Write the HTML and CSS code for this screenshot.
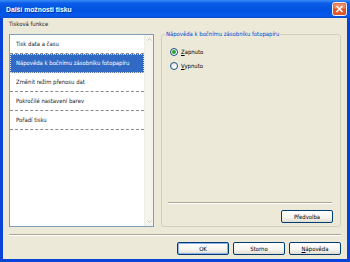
FILE: index.html
```html
<!DOCTYPE html>
<html>
	<head>
		<meta charset="utf-8" />
		<title>Další možnosti tisku</title>
		<link rel="stylesheet" href="styles.css">
	</head>
	<body>
<div class="window">
    <div class="titlebar">
        <span class="title">Další možnosti tisku</span>
        <svg class="close" width="15" height="14" viewBox="0 0 15 14">
            <rect x="0.5" y="0.5" width="14" height="13" rx="2" fill="#e0572f" stroke="#f2f2f2"/>
            <rect x="1.5" y="1.5" width="12" height="5" rx="1" fill="#ec8a66"/>
            <path d="M4.5 4L10.5 10M10.5 4L4.5 10" stroke="#fff" stroke-width="1.6"/>
        </svg>
    </div>
    <div class="content">
        <div class="label">Tisková funkce</div>
        <div class="main">
            <div class="listbox">
                <ul class="items">
                    <li>Tisk data a času</li>
                    <li class="selected">Nápověda k bočnímu zásobníku fotopapíru</li>
                    <li>Změnit režim přenosu dat</li>
                    <li>Pokročilé nastavení barev</li>
                    <li>Pořadí tisku</li>
                </ul>
                <div class="scrollbar">
                    <span class="arrow"><svg width="5" height="3" viewBox="0 0 5 3"><path d="M0.5 2.5L2.5 0.5L4.5 2.5" fill="none" stroke="#c9c7ba"/></svg></span>
                    <span class="track"></span>
                    <span class="arrow"><svg width="5" height="3" viewBox="0 0 5 3"><path d="M0.5 0.5L2.5 2.5L4.5 0.5" fill="none" stroke="#c9c7ba"/></svg></span>
                </div>
            </div>
            <fieldset class="group">
                <legend>Nápověda k bočnímu zásobníku fotopapíru</legend>
                <label class="radio"><span class="circle checked"></span><span><u>Z</u>apnuto</span></label>
                <label class="radio"><span class="circle"></span><span><u>V</u>ypnuto</span></label>
                <div class="spacer"></div>
                <div class="etched inner"></div>
                <div class="group-actions"><button class="btn">Předvolba</button></div>
            </fieldset>
        </div>
        <div class="etched"></div>
        <div class="actions">
            <button class="btn default">OK</button>
            <button class="btn">Storno</button>
            <button class="btn"><u>N</u>ápověda</button>
        </div>
    </div>
</div>
	</body>
</html>
```

FILE: styles.css
```css
* {
    margin: 0;
    padding: 0;
    box-sizing: border-box;
}
body {
    width: 350px;
    height: 262px;
    overflow: hidden;
    font-family: "DejaVu Sans Condensed", "Liberation Sans", Arial, sans-serif;
    font-size: 5.9px;
    color: #000;
}
.window {
    width: 350px;
    height: 262px;
    display: flex;
    flex-direction: column;
    background: #0842d6;
}
.titlebar {
    height: 18px;
    flex: none;
    display: flex;
    align-items: center;
    justify-content: space-between;
    padding: 0 3px 0 6px;
    background: linear-gradient(to bottom, #3a8cf8 0%, #0b5ce8 18%, #0152e0 55%, #0659ee 85%, #0a4fd0 100%);
}
.title {
    color: #fff;
    font-family: "Liberation Sans", Arial, sans-serif;
    font-weight: bold;
    font-size: 6.8px;
    text-shadow: 1px 1px 0 #0a2f8c;
}
.close {
    display: block;
}
.content {
    flex: 1;
    margin: 0 3px 3px 3px;
    background: #ece9d8;
    padding: 0 6px;
    display: flex;
    flex-direction: column;
}
.label {
    height: 10px;
    line-height: 10px;
    margin-top: 1px;
    color: #222;
}
.main {
    display: flex;
    gap: 7px;
}
.listbox {
    width: 145px;
    height: 193px;
    margin-top: 5px;
    border: 1px solid #7f9db9;
    background: #fff;
    display: flex;
}
.items {
    flex: 1;
    list-style: none;
}
.items li {
    height: 19px;
    line-height: 18px;
    padding-left: 6px;
    border-bottom: 1px dashed #8a8a8a;
    white-space: nowrap;
    overflow: hidden;
    color: #222;
}
.items li.selected {
    background: #316ac5;
    color: #fff;
    outline: 1px dotted #d8d8d8;
    outline-offset: -1px;
}
.scrollbar {
    width: 9px;
    display: flex;
    flex-direction: column;
    background: #f5f4ee;
    border-left: 1px solid #eeede5;
}
.arrow {
    height: 9px;
    display: flex;
    align-items: center;
    justify-content: center;
    background: #f4f3ec;
}
.track {
    flex: 1;
}
.group {
    width: 180px;
    height: 198px;
    border: 1px solid #d0d0bf;
    border-radius: 3px;
    padding: 6px 7px 3px 6px;
    display: flex;
    flex-direction: column;
}
.group legend {
    color: #0046d5;
    padding: 0 1px;
    margin-left: -3px;
    line-height: 10px;
}
.radio {
    height: 14px;
    display: flex;
    align-items: center;
    gap: 3px;
    padding-left: 2px;
}
.radio u, .btn u {
    text-decoration: underline;
}
.circle {
    width: 8px;
    height: 8px;
    border-radius: 50%;
    border: 1px solid #1c5180;
    background: linear-gradient(135deg, #dcdbd3 0%, #fff 70%);
    display: flex;
    align-items: center;
    justify-content: center;
}
.circle.checked::after {
    content: "";
    width: 4px;
    height: 4px;
    border-radius: 50%;
    background: #2ba42b;
}
.spacer {
    flex: 1;
}
.etched {
    height: 2px;
    flex: none;
    margin-top: 7px;
    border-top: 1px solid #aca899;
    border-bottom: 1px solid #fff;
}
.etched.inner {
    margin: 0 1px 0 0;
}
.group-actions {
    display: flex;
    justify-content: flex-end;
    margin-top: 6px;
}
.actions {
    display: flex;
    justify-content: flex-end;
    gap: 4px;
    margin-top: 6px;
}
.btn {
    width: 52px;
    height: 13px;
    font-family: "DejaVu Sans Condensed", "Liberation Sans", Arial, sans-serif;
    font-size: 5.9px;
    color: #000;
    border: 1px solid #003c74;
    border-radius: 2px;
    background: linear-gradient(to bottom, #fff 0%, #f6f5f0 60%, #dedbd0 100%);
}
.btn.default {
    box-shadow: inset 0 0 0 1px #8eb1ec;
}
```
